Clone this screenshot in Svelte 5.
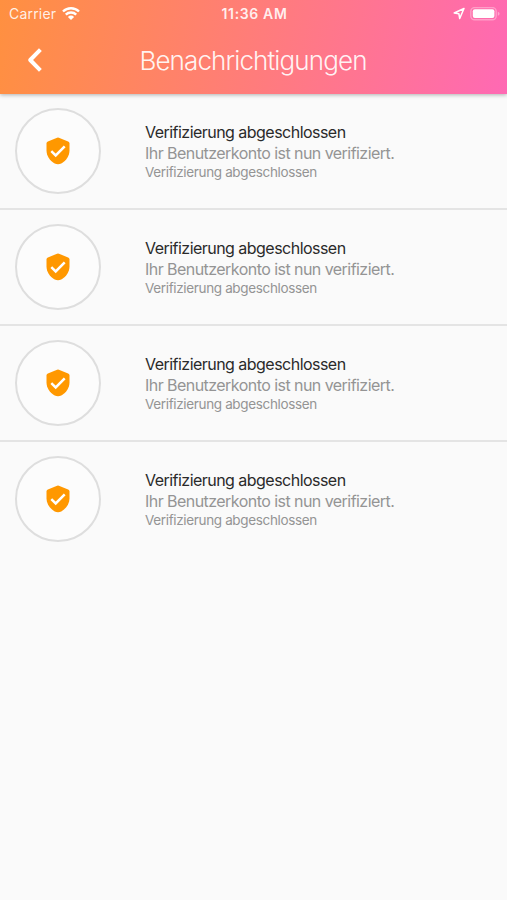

<script lang="ts">
	interface Notification {
		id: number;
		title: string;
		message: string;
		type: string;
	}

	const notifications: Notification[] = [1, 2, 3, 4].map((id) => ({
		id,
		title: 'Verifizierung abgeschlossen',
		message: 'Ihr Benutzerkonto ist nun verifiziert.',
		type: 'Verifizierung abgeschlossen'
	}));
</script>

<div class="screen">
	<header>
		<div class="status-bar">
			<div class="carrier">
				<span>Carrier</span>
				<svg width="18" height="14" viewBox="0 0 18 14" fill="none" stroke="#fff" stroke-width="2.4">
					<path d="M1 4.5a11.4 11.4 0 0 1 16 0" />
					<path d="M3.8 7.6a7.4 7.4 0 0 1 10.4 0" />
					<path d="M9 13 5.9 9.900a4.4 4.4 0 0 1 6.200 0z" fill="#fff" stroke="none" />
				</svg>
			</div>
			<span class="time">11:36 AM</span>
			<div class="indicators">
				<svg width="13" height="13" viewBox="0 0 13 13" fill="none" stroke="#fff" stroke-width="1.5" stroke-linejoin="round">
					<path d="M11 1.5 1.2 6l4.7.8.8 4.7z" />
				</svg>
				<svg width="31" height="14" viewBox="0 0 31 14">
					<rect x=".8" y=".6" width="25.4" height="12.2" rx="3.8" fill="none" stroke="#fff" stroke-opacity=".35" stroke-width="1.4" />
					<rect x="2.8" y="2.3" width="21.6" height="8.8" rx="2" fill="#fff" />
					<path d="M27.8 4.7q1.8.6 1.8 2t-1.8 2z" fill="#fff" fill-opacity=".4" />
				</svg>
			</div>
		</div>
		<div class="app-bar">
			<button class="back" aria-label="Zurück">
				<svg width="16" height="24" viewBox="0 0 16 24" fill="none" stroke="#fff" stroke-width="4" stroke-linejoin="round">
					<path d="M13.4 1.7 3.2 12l10.2 10.3" />
				</svg>
			</button>
			<h1>Benachrichtigungen</h1>
		</div>
	</header>

	<ul>
		{#each notifications as n (n.id)}
			<li>
				<div class="avatar">
					<!-- Verified shield -->
					<svg width="24" height="28" viewBox="0 0 24 28">
						<path
							fill="#ff9800"
							d="M11.1.7q.9-.35 1.8 0l9.2 3.7q1.4.6 1.4 2v6.8c0 5.4-3 10.3-8.2 13.2q-3.3 1.6-6.6 0C3.5 23.5.5 18.6.5 13.2V6.4q0-1.4 1.4-2z"
						/>
						<path fill="none" stroke="#fff" stroke-width="2.5" d="m5.3 14.2 4.4 4.3 9-9.1" />
					</svg>
				</div>
				<div class="text">
					<span class="title">{n.title}</span>
					<span class="message">{n.message}</span>
					<span class="type">{n.type}</span>
				</div>
			</li>
		{/each}
	</ul>
</div>

<style>
	:global(body) {
		background: #fafafa;
	}

	.screen {
		min-height: 900px;
		background: #fafafa;
		font-family: Inter, 'Liberation Sans', sans-serif;
	}

	svg {
		display: block;
	}

	/* ── Header ── */

	header {
		position: relative;
		height: 94px;
		color: #fff;
		background: linear-gradient(100.5deg, #ff9040, #ff69b4);
		box-shadow: 0 1px 4px rgba(0, 0, 0, 0.3);
	}

	.status-bar {
		display: grid;
		grid-template-columns: 1fr auto 1fr;
		align-items: center;
		height: 27px;
		padding: 0 7px 0 9px;
		font-size: 14px;
	}

	.carrier {
		display: flex;
		align-items: center;
		gap: 6px;
		color: rgba(255, 255, 255, 0.88);
		letter-spacing: 0.2px;
	}

	.time {
		font-size: 14px;
		font-weight: 600;
		letter-spacing: 0.65px;
		color: rgba(255, 255, 255, 0.88);
	}

	.indicators {
		display: flex;
		align-items: center;
		justify-content: flex-end;
		gap: 4px;
		margin-right: -1px;
	}

	.app-bar {
		display: grid;
		grid-template-columns: 70px 1fr 71px;
		align-items: center;
		height: 66px;
	}

	.back {
		justify-self: center;
		padding: 0;
		border: 0;
		background: none;
	}

	h1 {
		margin: 0;
		text-align: center;
		font-size: 26px;
		font-weight: 300;
		letter-spacing: -0.88px;
		color: rgba(255, 255, 255, 0.92);
	}

	/* ── List ── */

	ul {
		margin: 0;
		padding: 0;
		list-style: none;
	}

	li {
		display: flex;
		align-items: center;
		gap: 44px;
		box-sizing: border-box;
		height: 116px;
		padding: 0 15px;
		border-bottom: 2px solid #e4e4e4;
	}

	li:last-child {
		border-bottom-color: transparent;
	}

	.avatar {
		display: flex;
		align-items: center;
		justify-content: center;
		box-sizing: border-box;
		width: 86px;
		height: 86px;
		border: 2.5px solid #dedede;
		border-radius: 50%;
		background: #fcfcfc;
	}

	.text {
		display: flex;
		flex-direction: column;
		padding-top: 1px;
		white-space: nowrap;
	}

	.title {
		font-size: 16px;
		line-height: 21px;
		letter-spacing: -0.53px;
		color: #2a2a2a;
	}

	.message {
		font-size: 16px;
		line-height: 21px;
		letter-spacing: -0.55px;
		color: #949494;
	}

	.type {
		font-size: 13.5px;
		line-height: 17px;
		letter-spacing: -0.35px;
		color: #949494;
	}
</style>
